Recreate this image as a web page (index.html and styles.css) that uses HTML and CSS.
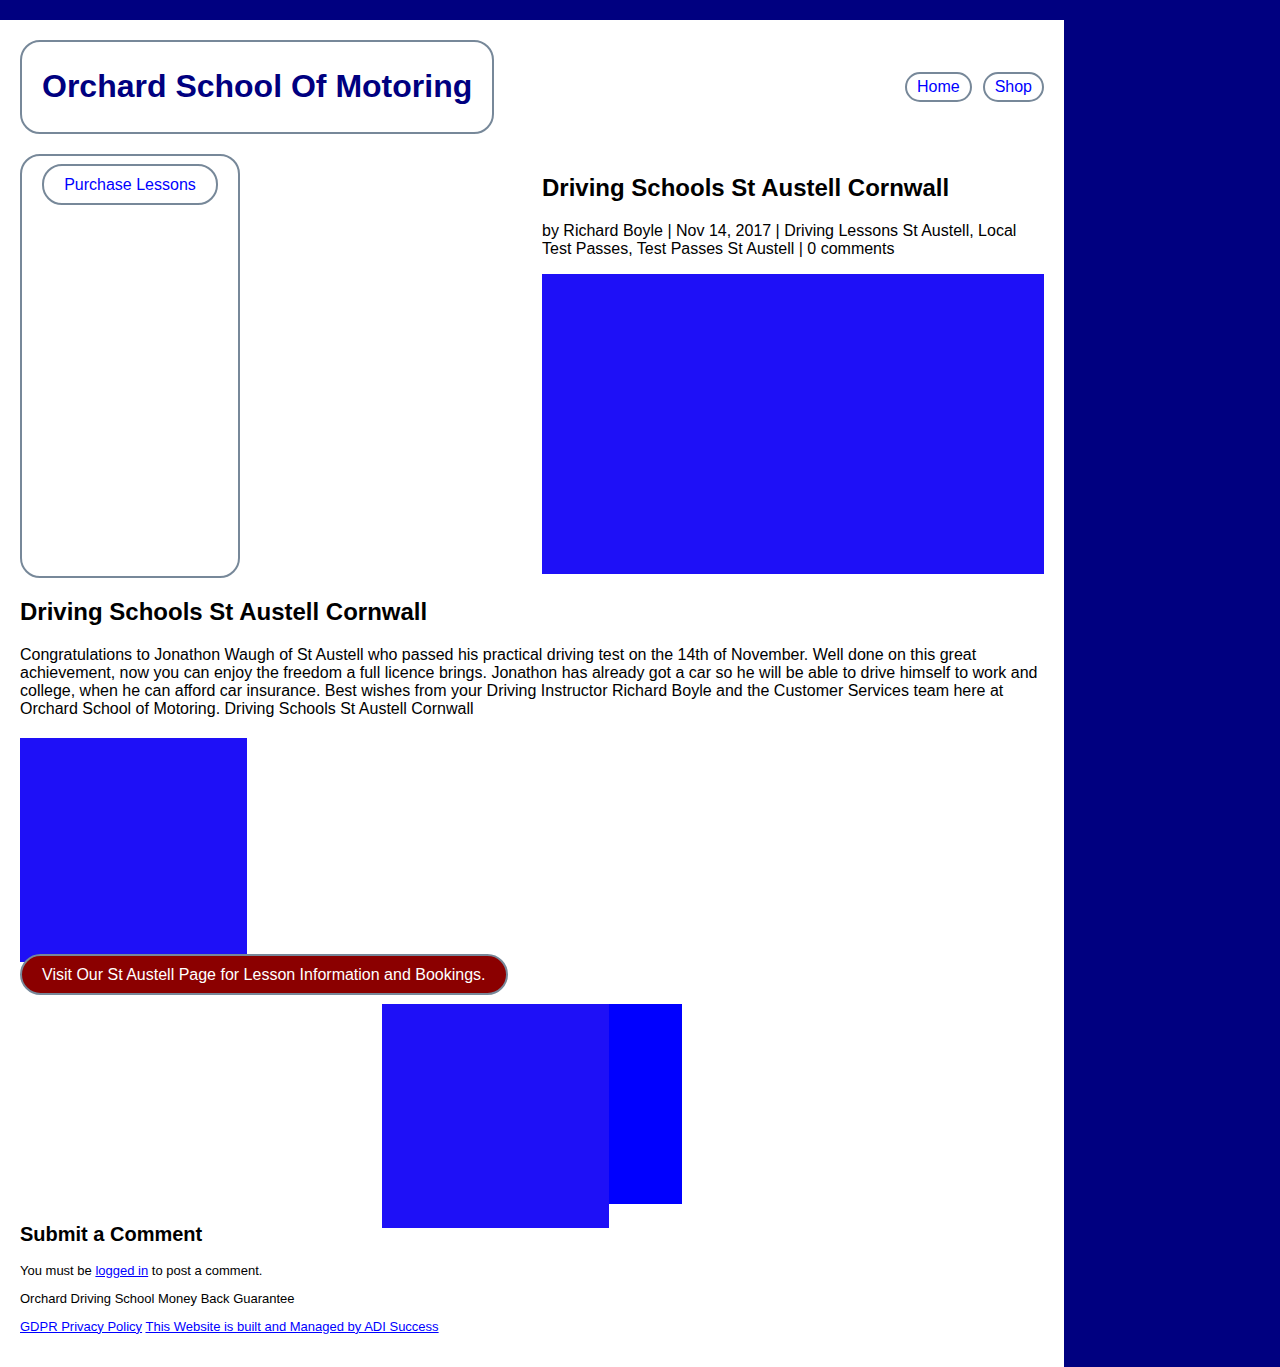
FILE: index.html
```html
<!DOCTYPE html>
<html lang="en">
<head>
<meta charset="utf-8">
<title>Driving Schools St Austell Cornwall | Orchard School Of Motoring</title>
<link rel="stylesheet" href="styles.css">
</head>
<body>
<div class="topbar"></div>
<div class="page">
  <header class="site-header">
    <div class="brand"><h1 class="brand-title">Orchard School Of Motoring</h1></div>
    <nav class="nav">
      <a class="pill" href="#">Home</a>
      <a class="pill" href="#">Shop</a>
    </nav>
  </header>

  <div class="top-row">
    <aside class="sidebar">
      <a class="side-btn" href="#">Purchase Lessons</a>
    </aside>
    <div class="spacer"></div>
    <article class="post-head">
      <h2 class="post-title">Driving Schools St Austell Cornwall</h2>
      <p class="meta">by Richard Boyle | Nov 14, 2017 | Driving Lessons St Austell, Local Test Passes, Test Passes St Austell | 0 comments</p>
      <div class="feature-img"></div>
    </article>
  </div>

  <h2 class="post-title">Driving Schools St Austell Cornwall</h2>
  <p class="body-text">Congratulations to Jonathon Waugh of St Austell who passed his practical driving test on the 14th of November. Well done on this great achievement, now you can enjoy the freedom a full licence brings. Jonathon has already got a car so he will be able to drive himself to work and college, when he can afford car insurance. Best wishes from your Driving Instructor Richard Boyle and the Customer Services team here at Orchard School of Motoring. Driving Schools St Austell Cornwall</p>

  <div class="photo"></div>
  <a class="cta" href="#">Visit Our St Austell Page for Lesson Information and Bookings.</a>

  <div class="gallery">
    <div class="gallery-back"></div>
    <div class="gallery-front"></div>
  </div>

  <h3 class="comment-title">Submit a Comment</h3>
  <p class="small">You must be <a href="#">logged in</a> to post a comment.</p>
  <p class="small">Orchard Driving School Money Back Guarantee</p>
  <p class="small"><a href="#">GDPR Privacy Policy</a> <a href="#">This Website is built and Managed by ADI Success</a></p>
</div>
</body>
</html>
```

FILE: styles.css
```css
html, body {
  margin: 0;
  padding: 0;
}
body {
  background: #000080;
  font-family: "Liberation Sans", Arial, sans-serif;
  font-size: 16px;
  color: #000;
}
.topbar {
  height: 20px;
}
.page {
  background: #fff;
  width: 1024px;
  padding: 20px;
  min-height: 1307px;
}
.site-header {
  display: flex;
  justify-content: space-between;
  align-items: center;
}
.brand {
  border: 2px solid #778899;
  border-radius: 20px;
  padding: 26px 20px 27px;
}
.brand-title {
  margin: 0;
  font-size: 32px;
  line-height: 37px;
  font-weight: bold;
  color: #000080;
}
.nav {
  display: flex;
  gap: 11px;
}
.pill {
  display: block;
  border: 2px solid #778899;
  border-radius: 16px;
  padding: 4px 10px;
  color: #0000ff;
  text-decoration: none;
  line-height: 18.4px;
}
.top-row {
  display: grid;
  grid-template-columns: 220px 1fr 502px;
  align-items: start;
  margin-top: 20px;
}
.sidebar {
  box-sizing: border-box;
  height: 424px;
  border: 2px solid #778899;
  border-radius: 20px;
  padding: 8px 20px;
}
.side-btn {
  display: block;
  border: 2px solid #778899;
  border-radius: 20px;
  padding: 10px 0 9px;
  text-align: center;
  color: #0000ff;
  text-decoration: none;
  line-height: 18px;
}
.post-title {
  font-size: 24px;
  font-weight: bold;
  margin: 20px 0;
  line-height: 27.6px;
}
.meta {
  margin: 0 0 16px;
  line-height: 18px;
}
.feature-img {
  height: 300px;
  background: #1e10f7;
}
.body-text {
  margin: 0 0 20px;
  line-height: 18px;
}
.photo {
  width: 227px;
  height: 224px;
  background: #1e10f7;
}
.cta {
  display: inline-block;
  margin-top: -8px;
  border: 2px solid #778899;
  border-radius: 21px;
  background: #8b0000;
  color: #fff;
  text-decoration: none;
  padding: 10px 20px 9px;
  line-height: 18px;
}
.gallery {
  position: relative;
  width: 300px;
  margin: 9px auto 0;
}
.gallery-back {
  height: 200px;
  background: #0000ff;
}
.gallery-front {
  position: absolute;
  top: 0;
  left: 0;
  width: 227px;
  height: 224px;
  background: #1e10f7;
}
.comment-title {
  font-size: 20px;
  font-weight: bold;
  margin: 19px 0 17px;
  line-height: 23px;
}
.small {
  font-size: 13px;
  line-height: 15px;
  margin: 13px 0;
}
.small a {
  color: #0000ff;
}
```
